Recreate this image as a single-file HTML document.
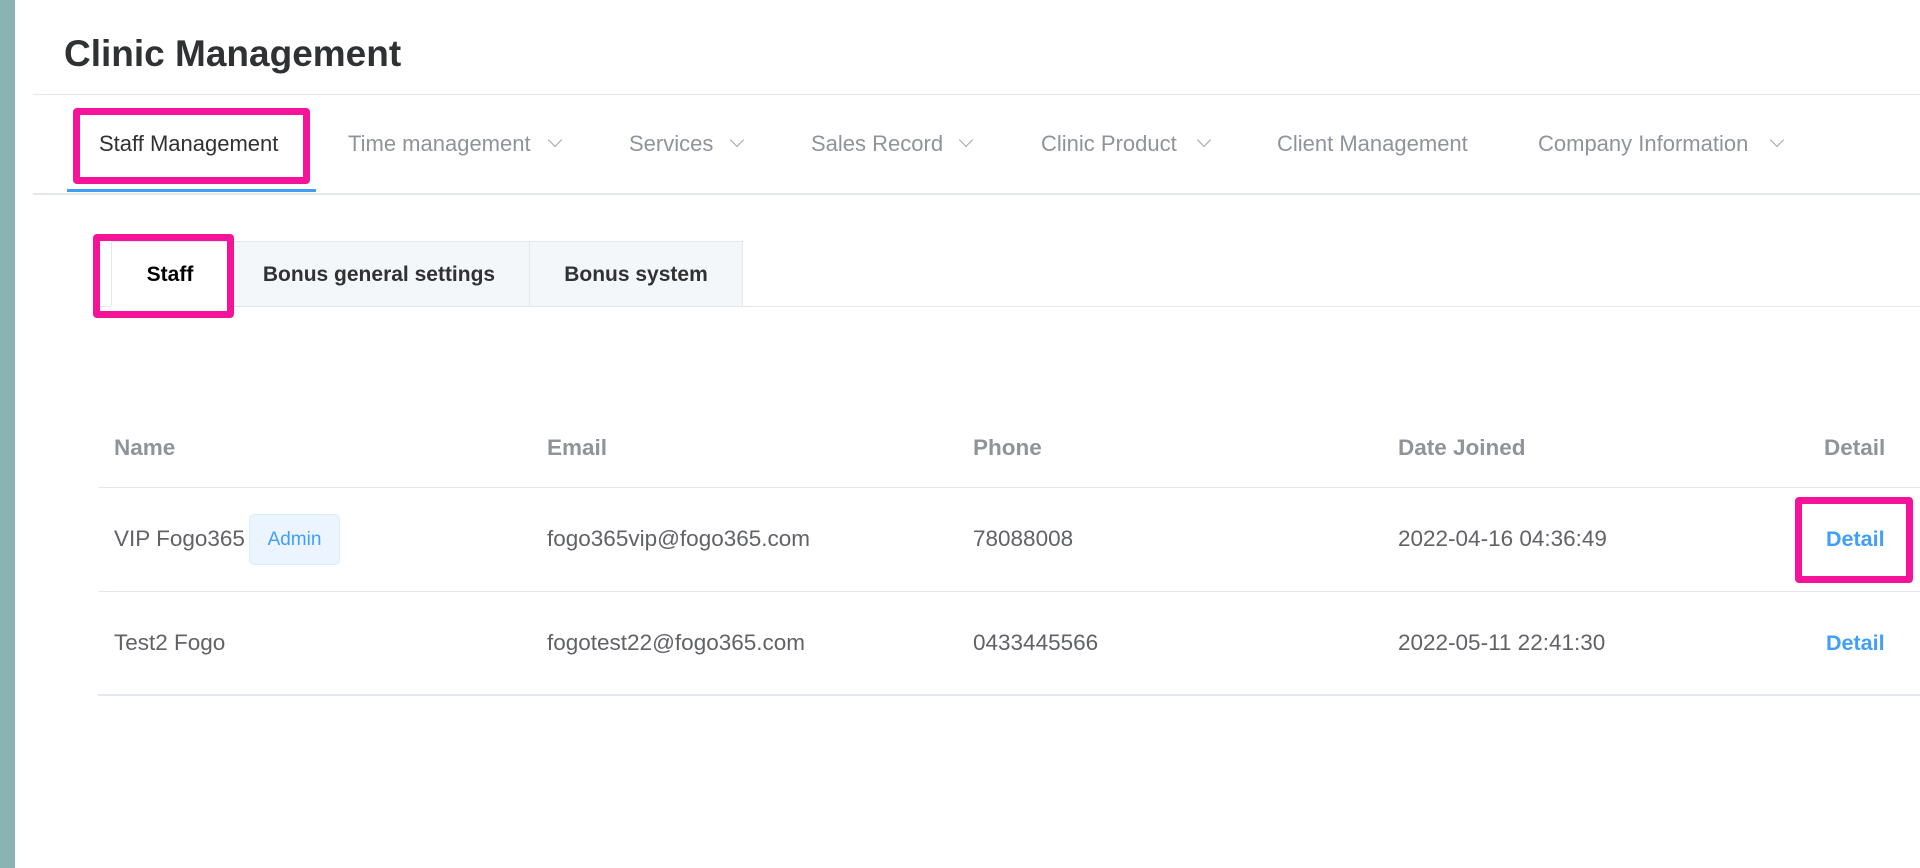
<!DOCTYPE html>
<html><head><meta charset="utf-8"><style>
*{margin:0;padding:0;box-sizing:border-box}
body{width:1920px;height:868px;background:#fff;font-family:"Liberation Sans",Arial,sans-serif;position:relative;overflow:hidden}
.a{position:absolute;white-space:nowrap}
.side{left:0;top:0;width:15px;height:868px;background:#8bb3b4}
.hl{height:1px;background:#e4e7ed}
.nav{top:131px;font-size:22px;color:#909399;line-height:26px}
.chev{width:10px;height:10px;border-right:1.5px solid #a0a3a8;border-bottom:1.5px solid #a0a3a8;transform:rotate(45deg);top:135px}
.pink{border:7px solid #f5139a;border-radius:4px}
.tab{top:241px;height:66px;font-size:21px;font-weight:bold;color:#303133;line-height:66px;text-align:center;background:#f4f7fa;border:1px solid #e4e7ed}
.th{top:435px;font-size:22.5px;font-weight:bold;color:#909399;line-height:26px}
.td{font-size:22.5px;color:#606266;line-height:26px}
.lk{font-size:21.5px;font-weight:bold;color:#409eff;line-height:26px}
</style></head><body>
<div class="a side"></div>
<div class="a" style="left:64px;top:32px;font-size:37px;font-weight:bold;color:#303133;line-height:44px">Clinic Management</div>
<div class="a hl" style="left:33px;top:94px;width:1887px"></div>

<div class="a nav" style="left:99px;color:#303133">Staff Management</div>
<div class="a nav" style="left:348px">Time management</div><div class="a chev" style="left:550px"></div>
<div class="a nav" style="left:629px">Services</div><div class="a chev" style="left:732px"></div>
<div class="a nav" style="left:811px">Sales Record</div><div class="a chev" style="left:961px"></div>
<div class="a nav" style="left:1041px">Clinic Product</div><div class="a chev" style="left:1199px"></div>
<div class="a nav" style="left:1277px">Client Management</div>
<div class="a nav" style="left:1538px">Company Information</div><div class="a chev" style="left:1772px"></div>
<div class="a hl" style="left:33px;top:193px;width:1887px;height:2px"></div>
<div class="a" style="left:67px;top:189px;width:249px;height:3px;background:#409eff"></div>
<div class="a pink" style="left:73px;top:108px;width:237px;height:76px"></div>

<div class="a tab" style="left:529px;width:214px">Bonus system</div>
<div class="a tab" style="left:228px;width:302px">Bonus general settings</div>
<div class="a tab" style="left:111px;width:118px;background:#fff;border-bottom-color:#fff;color:#000">Staff</div>
<div class="a hl" style="left:98px;top:306px;width:1822px"></div>
<div class="a hl" style="left:111px;top:306px;width:117px;background:#fff"></div>
<div class="a pink" style="left:93px;top:234px;width:141px;height:84px"></div>

<div class="a th" style="left:114px">Name</div>
<div class="a th" style="left:547px">Email</div>
<div class="a th" style="left:973px">Phone</div>
<div class="a th" style="left:1398px">Date Joined</div>
<div class="a th" style="left:1824px">Detail</div>
<div class="a hl" style="left:98px;top:487px;width:1822px"></div>

<div class="a td" style="left:114px;top:526px">VIP Fogo365</div>
<div class="a" style="left:249px;top:514px;width:91px;height:51px;background:#ecf5ff;border:1px solid #d9ecff;border-radius:5px;color:#409eff;font-size:19px;line-height:49px;text-align:center">Admin</div>
<div class="a td" style="left:547px;top:526px">fogo365vip@fogo365.com</div>
<div class="a td" style="left:973px;top:526px">78088008</div>
<div class="a td" style="left:1398px;top:526px">2022-04-16 04:36:49</div>
<div class="a lk" style="left:1826px;top:526px">Detail</div>
<div class="a hl" style="left:98px;top:591px;width:1822px"></div>

<div class="a td" style="left:114px;top:630px">Test2 Fogo</div>
<div class="a td" style="left:547px;top:630px">fogotest22@fogo365.com</div>
<div class="a td" style="left:973px;top:630px">0433445566</div>
<div class="a td" style="left:1398px;top:630px">2022-05-11 22:41:30</div>
<div class="a lk" style="left:1826px;top:630px">Detail</div>
<div class="a hl" style="left:98px;top:694px;width:1822px;height:2px"></div>

<div class="a pink" style="left:1795px;top:497px;width:118px;height:86px"></div>
</body></html>
